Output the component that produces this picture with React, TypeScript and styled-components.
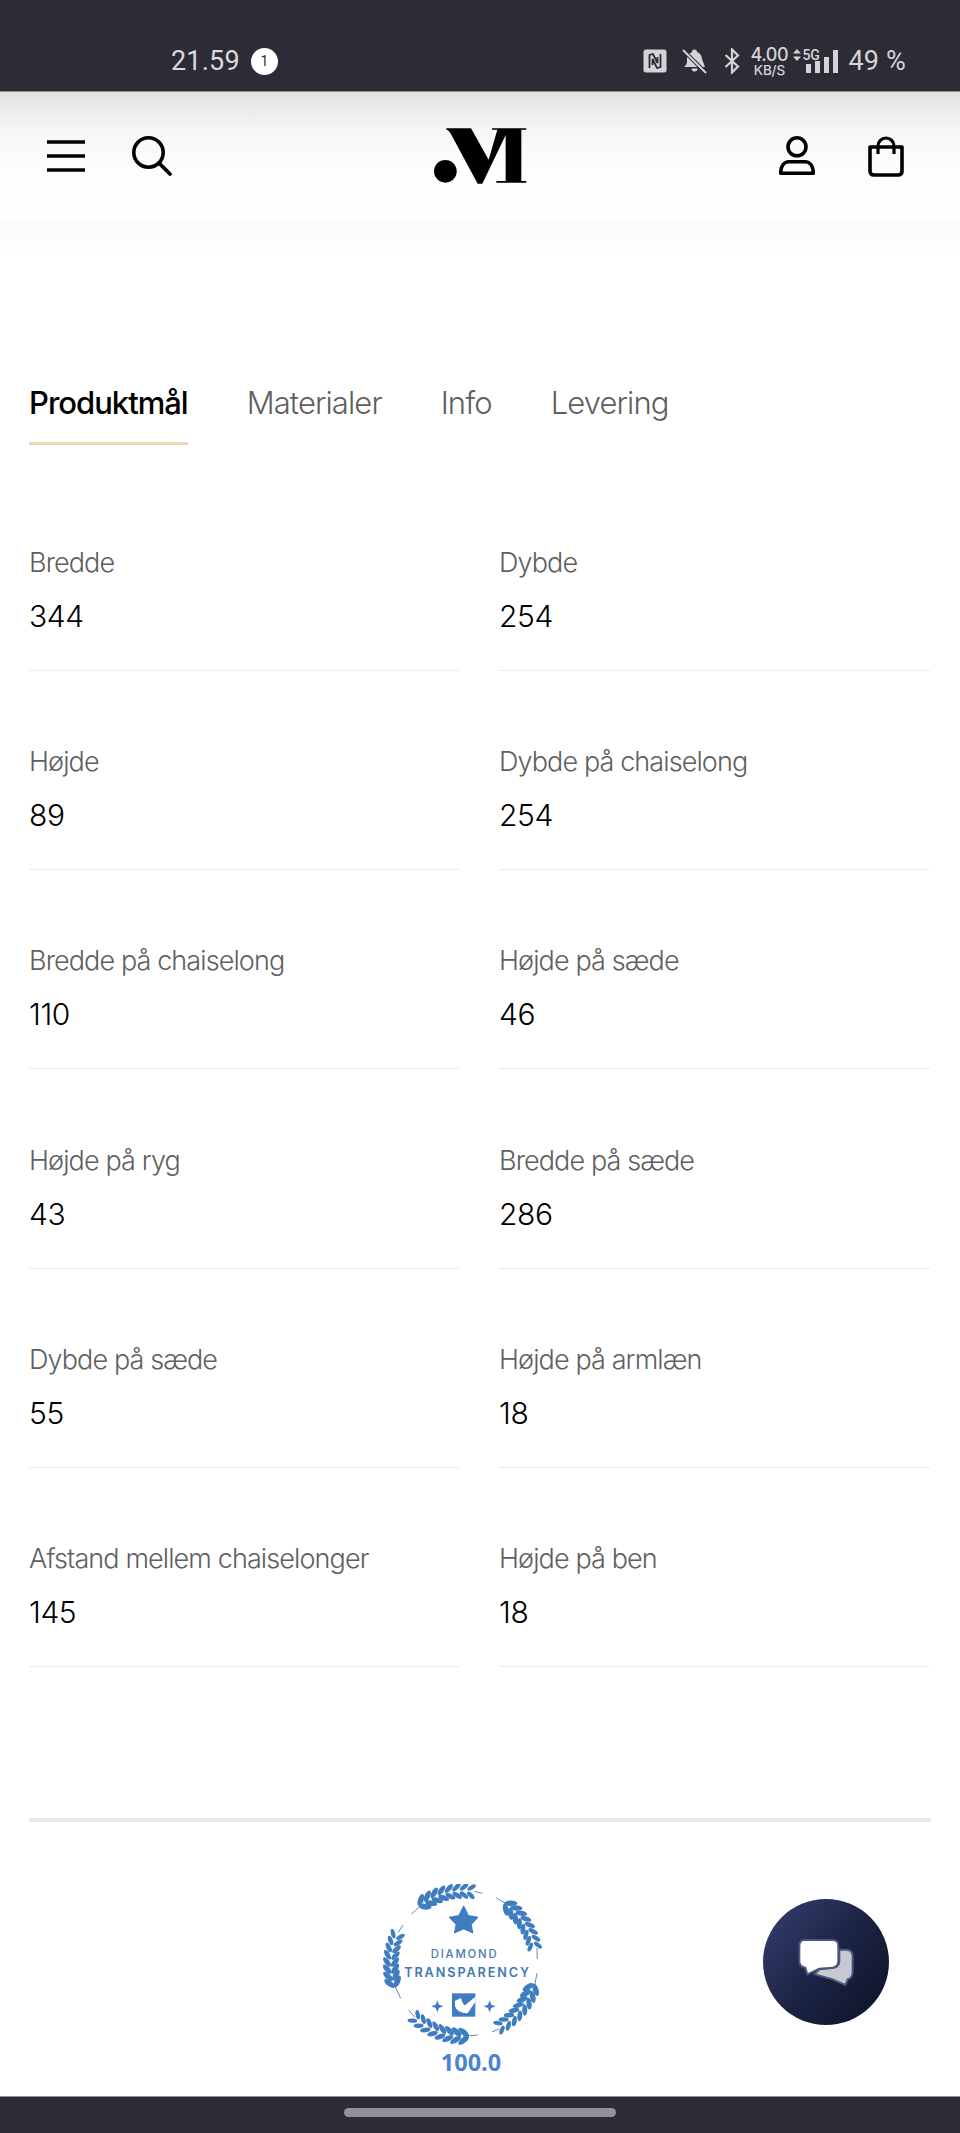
import React from 'react';
import styled, { createGlobalStyle } from 'styled-components';

const tabs = ['Produktmål', 'Materialer', 'Info', 'Levering'];

const specs = [
  { label: 'Bredde', value: '344' },
  { label: 'Dybde', value: '254' },
  { label: 'Højde', value: '89' },
  { label: 'Dybde på chaiselong', value: '254' },
  { label: 'Bredde på chaiselong', value: '110' },
  { label: 'Højde på sæde', value: '46' },
  { label: 'Højde på ryg', value: '43' },
  { label: 'Bredde på sæde', value: '286' },
  { label: 'Dybde på sæde', value: '55' },
  { label: 'Højde på armlæn', value: '18' },
  { label: 'Afstand mellem chaiselonger', value: '145' },
  { label: 'Højde på ben', value: '18' },
];

// the five laurel branches of the badge, all growing clockwise
const branches = [
  { from: -124, to: -84, stems: 'M215 160 L252 128 M405 92 L428 98' },
  { from: -52, to: -14, stems: 'M470 112 L512 136 M592 262 L593 295' },
  { from: 20, to: 60, stems: 'M592 338 L583 385 M478 505 L457 514' },
  { from: 90, to: 132, stems: 'M370 527 L415 523 M226 470 L207 448' },
  { from: 165, to: 203, stems: 'M165 375 L183 413 M176 215 L190 193' },
];

const CX = 372;
const CY = 309;
const RADIUS = 218;

const Laurel = ({ from, to, stems }: { from: number; to: number; stems: string }) => {
  const leaves = [];
  const count = 8;
  for (let i = 0; i < count; i++) {
    const a = from + ((to - from) * i) / (count - 1);
    const rad = (a * Math.PI) / 180;
    const size = 1 - i * 0.035;
    for (const side of [-1, 1]) {
      const r = RADIUS + side * 12;
      const x = CX + r * Math.cos(rad);
      const y = CY + r * Math.sin(rad);
      const rot = a + 90 - side * 38;
      leaves.push(
        <ellipse
          key={`${i}-${side}`}
          cx={x}
          cy={y}
          rx={19 * size}
          ry={8.5 * size}
          fill="#3f7cc0"
          transform={`rotate(${rot} ${x} ${y})`}
        />,
      );
    }
  }
  return (
    <g>
      <path d={stems} fill="none" stroke="#5b8abb" strokeWidth="3" />
      {leaves}
    </g>
  );
};

const BadgeArt = () => (
  <svg width="163.3" height="161.7" viewBox="130 70 490 485">
    {branches.map((b) => (
      <Laurel key={b.from} from={b.from} to={b.to} stems={b.stems} />
    ))}
    <path
      d="M372 137 L386 165 L414 170 L394 191 L399 216 L372 204 L345 216 L350 191 L330 170 L358 165z"
      fill="#3f7cc0"
      stroke="#3f7cc0"
      strokeWidth="4"
      strokeLinejoin="round"
    />
    <text x="372" y="293" textAnchor="middle" textLength="198" fontFamily="Inter, sans-serif" fontSize="34" fontWeight="500" fill="#4a7cb0">
      DIAMOND
    </text>
    <text x="381" y="349" textAnchor="middle" textLength="375" fontFamily="Inter, sans-serif" fontSize="38" fontWeight="600" fill="#3f78b4">
      TRANSPARENCY
    </text>
    <rect x="337" y="398" width="70" height="70" fill="#3f7cc0" />
    <path d="M346 420 L364 412 Q370 434 376 434 L407 408 V424 L384 458 Q352 458 346 436z" fill="#fff" />
    <path d="M293 419 L298 432 L311 437 L298 442 L293 455 L288 442 L275 437 L288 432z" fill="#3f7cc0" />
    <path d="M450 419 L455 432 L468 437 L455 442 L450 455 L445 442 L432 437 L445 432z" fill="#3f7cc0" />
  </svg>
);

const App = () => {
  return (
    <Page>
      <GlobalStyle />
      <StatusBar>
        <Clock>21.59</Clock>
        <NotifyDot>1</NotifyDot>
        <StatusIcons>
          <svg width="24" height="24" viewBox="0 0 24 24">
            <rect x="0.5" y="0.5" width="23" height="23" rx="2.5" fill="#d4d4d6" />
            <path d="M6.5 19 V6 L10 5 L14.5 14 V8" fill="none" stroke="#2d2c36" strokeWidth="1.8" />
            <path d="M17.5 5 V18 L14 19 L9.5 10 V16" fill="none" stroke="#2d2c36" strokeWidth="1.8" />
          </svg>
          <BellIcon width="25" height="26" viewBox="0 0 25 26">
            <path d="M2 19 c2-2 3-3 3-6 V11 c0-4 3-6 5-7 a2.5 2.5 0 0 1 5 0 c3 1 5 4 5 7 l3 8z" fill="#d4d4d6" />
            <path d="M9.5 20.5 h6 a3 3 0 0 1-6 0z" fill="#d4d4d6" />
            <path d="M1 2 L24 25" stroke="#2d2c36" strokeWidth="4" />
            <path d="M1 2 L24 25" stroke="#d4d4d6" strokeWidth="2" />
          </BellIcon>
          <BluetoothIcon width="16" height="26" viewBox="0 0 16 26">
            <path d="M1.5 7 L14 18.5 L8 24.5 V1.5 L14 7.5 L1.5 19" fill="none" stroke="#d4d4d6" strokeWidth="2.2" />
          </BluetoothIcon>
          <Speed>
            <SpeedValue>4.00</SpeedValue>
            <SpeedUnit>KB/S</SpeedUnit>
          </Speed>
          <Signal>
            <Network>
              <svg width="8" height="12" viewBox="0 0 8 12">
                <path d="M4 0 L8 4.6 H0z M4 12 L0 7.4 H8z" fill="#d4d4d6" />
              </svg>
              5G
            </Network>
            <Bars>
              <Bar $height={9} />
              <Bar $height={12} />
              <Bar $height={16} />
              <Bar $height={23} />
            </Bars>
          </Signal>
          <Battery>49 %</Battery>
        </StatusIcons>
      </StatusBar>

      <Header>
        <HeaderSide>
          <svg width="39" height="33" viewBox="0 0 39 33">
            <path d="M0 2 H38 M0 16 H38 M0 30 H38" stroke="#000" strokeWidth="3.3" />
          </svg>
          <svg width="42" height="42" viewBox="0 0 42 42">
            <circle cx="17.5" cy="17.5" r="14.7" fill="none" stroke="#000" strokeWidth="3.6" />
            <path d="M28 28 L39 39" stroke="#000" strokeWidth="3.8" strokeLinecap="round" />
          </svg>
        </HeaderSide>
        <svg width="94.7" height="57.3" viewBox="38 38 284 172">
          <circle cx="75" cy="171" r="34" fill="#000" />
          <path
            d="M78 42 H152 L205 136 L231 46 H215 V42 H318 V46 H303 V200 H318 V205 H228 V200 H256 V62 L186 208 H172 L92 60 Q85 46 78 46z"
            fill="#000"
          />
        </svg>
        <HeaderSideRight>
          <svg width="36" height="40" viewBox="0 0 36 40">
            <circle cx="18" cy="10.8" r="9" fill="none" stroke="#000" strokeWidth="3.6" />
            <path d="M10 25.7 H26 C31 25.7 34.3 30 34.3 37.3 H1.7 C1.7 30 5 25.7 10 25.7z" fill="none" stroke="#000" strokeWidth="3.6" strokeLinejoin="round" />
          </svg>
          <svg width="36" height="41" viewBox="0 0 36 41">
            <path d="M2 11 H34 V35 Q34 39 30 39 H6 Q2 39 2 35z" fill="none" stroke="#000" strokeWidth="3.6" strokeLinejoin="round" />
            <path d="M10 18 V10 a8 8 0 0 1 16 0 V18" fill="none" stroke="#000" strokeWidth="3.2" />
          </svg>
        </HeaderSideRight>
      </Header>
      <HeaderShadow />

      <Content>
        <TabList>
          {tabs.map((tab, i) => (
            <Tab key={tab} $active={i === 0}>
              {tab}
            </Tab>
          ))}
        </TabList>

        <SpecGrid>
          {specs.map((spec) => (
            <SpecItem key={spec.label}>
              <SpecLabel>{spec.label}</SpecLabel>
              <SpecValue>{spec.value}</SpecValue>
            </SpecItem>
          ))}
        </SpecGrid>

        <Divider />

        <Badge>
          <BadgeArt />
          <Score>100.0</Score>
        </Badge>
      </Content>

      <ChatButton>
        <svg width="60" height="50" viewBox="230 238 180 150">
          <path
            d="M360 276 H385 Q402 280 400 300 V345 Q398 362 385 365 L378 382 L340 365 L285 350 L300 335 L345 330 Q360 325 360 310z"
            fill="#c7c9d1"
            stroke="#49577f"
            strokeWidth="6"
          />
          <path
            d="M255 247 H340 Q357 247 357 265 V310 Q357 328 340 330 L300 333 L264 350 L258 330 Q240 328 240 310 V265 Q240 247 255 247z"
            fill="#fff"
            stroke="#49577f"
            strokeWidth="6"
          />
        </svg>
      </ChatButton>

      <NavBar>
        <NavPill />
      </NavBar>
    </Page>
  );
};

const GlobalStyle = createGlobalStyle`
  html, body {
    margin: 0;
    padding: 0;
    background: #fff;
  }
  * {
    box-sizing: border-box;
  }
`;

const Page = styled.div`
  position: relative;
  display: flex;
  flex-direction: column;
  width: 960px;
  height: 2133px;
  overflow: hidden;
  background: #fff;
  font-family: Inter, 'Liberation Sans', sans-serif;
`;

const StatusBar = styled.div`
  display: flex;
  align-items: center;
  flex: 0 0 92px;
  padding: 31px 54px 0 171px;
  background: #2d2c36;
  border-bottom: 1px solid #8e8e92;
`;

const Clock = styled.span`
  font-family: Roboto, sans-serif;
  font-size: 27px;
  color: #d9d9dc;
  letter-spacing: 0.2px;
`;

const NotifyDot = styled.span`
  display: flex;
  align-items: center;
  justify-content: center;
  width: 27px;
  height: 27px;
  margin-left: 11px;
  border-radius: 50%;
  background: #fff;
  color: #2d2c36;
  font-family: Roboto, sans-serif;
  font-size: 14px;
`;

const StatusIcons = styled.div`
  display: flex;
  align-items: center;
  margin-left: auto;
  color: #d4d4d6;
`;

const BellIcon = styled.svg`
  margin-left: 15px;
`;

const BluetoothIcon = styled.svg`
  margin-left: 17px;
`;

const Speed = styled.div`
  display: flex;
  flex-direction: column;
  align-items: center;
  width: 38px;
  margin-left: 10px;
  font-weight: 500;
`;

const SpeedValue = styled.span`
  font-size: 18px;
  line-height: 18px;
  letter-spacing: -0.4px;
`;

const SpeedUnit = styled.span`
  font-size: 13.5px;
  line-height: 13px;
  letter-spacing: -0.2px;
`;

const Signal = styled.div`
  position: relative;
  display: flex;
  align-items: flex-end;
  width: 45px;
  height: 23px;
  margin-left: 5px;
`;

const Network = styled.div`
  position: absolute;
  top: -1px;
  left: 0;
  display: flex;
  align-items: center;
  gap: 1px;
  font-family: Roboto, sans-serif;
  font-size: 14px;
  font-weight: 500;
  line-height: 12px;
`;

const Bars = styled.div`
  display: flex;
  align-items: flex-end;
  gap: 4px;
  margin-left: 13px;
`;

const Bar = styled.span<{ $height: number }>`
  width: 5px;
  height: ${(p) => p.$height}px;
  background: #d4d4d6;
`;

const Battery = styled.span`
  margin-left: 10px;
  font-family: Roboto, sans-serif;
  font-size: 27px;
  letter-spacing: 0.2px;
`;

const Header = styled.header`
  display: flex;
  align-items: center;
  justify-content: space-between;
  flex: 0 0 128px;
  padding: 0 56px 0 47px;
  background: linear-gradient(180deg, #e1e1e1 0%, #f6f6f6 30%, #fdfdfd 60%, #fff 100%);
`;

const HeaderSide = styled.div`
  display: flex;
  align-items: center;
  gap: 45px;
  width: 170px;
`;

const HeaderSideRight = styled.div`
  display: flex;
  align-items: center;
  justify-content: flex-end;
  gap: 53px;
  width: 161px;
`;

const HeaderShadow = styled.div`
  flex: 0 0 40px;
  background: linear-gradient(180deg, #fafafa 0%, #fff 100%);
`;

const Content = styled.main`
  display: flex;
  flex-direction: column;
  flex: 1;
  padding: 125px 29px 0;
`;

const TabList = styled.nav`
  display: flex;
  gap: 59px;
`;

const Tab = styled.div<{ $active?: boolean }>`
  height: 60px;
  border-bottom: 3px solid ${(p) => (p.$active ? '#ead8b2' : 'transparent')};
  color: ${(p) => (p.$active ? '#000' : '#5f5f5f')};
  font-size: 31px;
  font-weight: ${(p) => (p.$active ? 450 : 300)};
  line-height: 36px;
  letter-spacing: ${(p) => (p.$active ? '-1px' : '-0.9px')};
`;

const SpecGrid = styled.div`
  display: grid;
  grid-template-columns: 431px 431px;
  column-gap: 39px;
  margin-top: 100px;
`;

const SpecItem = styled.div`
  display: flex;
  flex-direction: column;
  height: 126px;
  margin-bottom: 73.2px;
  border-bottom: 1px solid #ececec;
`;

const SpecLabel = styled.div`
  color: #5f5f5f;
  font-size: 27px;
  font-weight: 300;
  line-height: 36px;
  letter-spacing: -0.9px;
`;

const SpecValue = styled.div`
  margin-top: 17px;
  color: #000;
  font-size: 30px;
  font-weight: 350;
  line-height: 36px;
  letter-spacing: -0.4px;
`;

const Divider = styled.div`
  height: 4px;
  margin-top: 78px;
  background: #e6eaea;
`;

const Badge = styled.div`
  display: flex;
  flex-direction: column;
  align-items: center;
  margin: 62px 0 0 -30px;
`;

const Score = styled.div`
  margin: 1px 0 0 12px;
  color: #4a85cc;
  font-family: 'Open Sans', sans-serif;
  font-size: 23.5px;
  font-weight: 700;
  line-height: 30px;
`;

const ChatButton = styled.div`
  position: absolute;
  left: 763px;
  top: 1899px;
  display: flex;
  align-items: center;
  justify-content: center;
  width: 126px;
  height: 126px;
  border-radius: 50%;
  background: linear-gradient(130deg, #36406f 0%, #1c2445 50%, #0a1226 100%);
`;

const NavBar = styled.div`
  display: flex;
  justify-content: center;
  flex: 0 0 37px;
  padding-top: 11px;
  background: #2d2c36;
  border-top: 1px solid #8e8e92;
`;

const NavPill = styled.div`
  width: 272px;
  height: 9px;
  border-radius: 5px;
  background: #939296;
`;

export default App;
